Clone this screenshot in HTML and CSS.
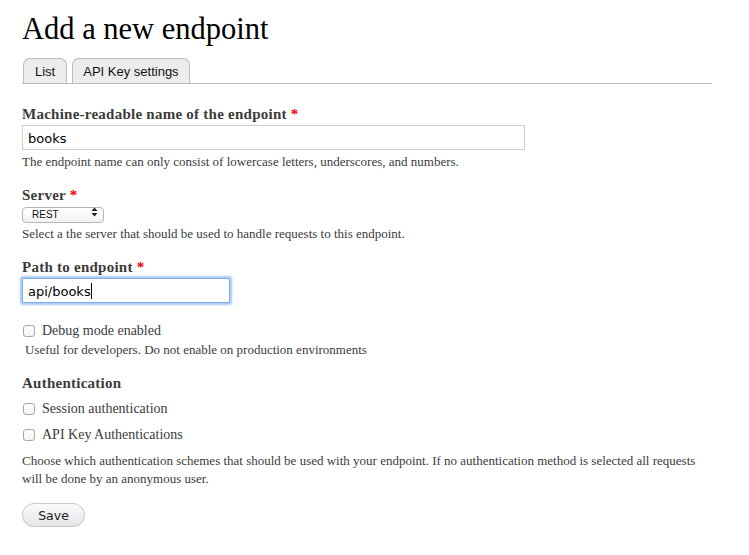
FILE: index.html
```html
<!DOCTYPE html>
<html>
<head>
<meta charset="utf-8">
<link rel="stylesheet" href="styles.css">
</head>
<body>
<div class="page">
  <h1 class="title">Add a new endpoint</h1>
  <ul class="tabs">
    <li class="tab">List</li>
    <li class="tab">API Key settings</li>
  </ul>
  <form class="form">
    <div class="item">
      <label class="label">Machine-readable name of the endpoint <span class="req">*</span></label>
      <input class="text wide" type="text" value="books">
      <div class="desc">The endpoint name can only consist of lowercase letters, underscores, and numbers.</div>
    </div>
    <div class="item">
      <label class="label">Server <span class="req">*</span></label>
      <div class="select-wrap">
        <select class="select"><option>REST</option></select>
        <svg class="arrows" width="7" height="10" viewBox="0 0 7 10"><path d="M3.5 0.5 L6.5 4 L0.5 4 Z M0.5 6 L6.5 6 L3.5 9.5 Z" fill="#222"/></svg>
      </div>
      <div class="desc after-select">Select a the server that should be used to handle requests to this endpoint.</div>
    </div>
    <div class="item">
      <label class="label">Path to endpoint <span class="req">*</span></label>
      <div class="focus-wrap">
        <input class="text path focused" type="text" value="api/books"><span class="caret"></span>
      </div>
    </div>
    <div class="item check-item">
      <label class="check"><input type="checkbox" class="cb"><span>Debug mode enabled</span></label>
      <div class="desc indent">Useful for developers. Do not enable on production environments</div>
    </div>
    <div class="item">
      <div class="label">Authentication</div>
      <div class="checks">
        <label class="check"><input type="checkbox" class="cb"><span>Session authentication</span></label>
        <label class="check"><input type="checkbox" class="cb"><span>API Key Authentications</span></label>
      </div>
      <div class="desc multi">Choose which authentication schemes that should be used with your endpoint. If no authentication method is selected all requests will be done by an anonymous user.</div>
    </div>
    <div class="actions">
      <button type="button" class="btn">Save</button>
    </div>
  </form>
</div>
</body>
</html>
```
FILE: styles.css
```css
html, body {
  margin: 0;
  padding: 0;
  background: #fff;
}
.page {
  padding: 0 37px 0 22px;
  font-family: "Liberation Serif", "DejaVu Serif", serif;
  color: #3b3b3b;
}
.title {
  margin: 0;
  padding-top: 10px;
  font-family: "Liberation Serif", serif;
  font-weight: normal;
  font-size: 30.5px;
  line-height: 38px;
  color: #000;
}
.tabs {
  list-style: none;
  margin: 10px 0 0;
  padding: 0 0 0 1px;
  display: flex;
  gap: 5px;
  border-bottom: 1px solid #bbb;
  height: 25px;
}
.tab {
  font-family: "Liberation Sans", Arial, sans-serif;
  font-size: 13px;
  color: #111;
  background: #ededed;
  border: 1px solid #bbb;
  border-bottom: none;
  border-radius: 7px 7px 0 0;
  padding: 0 10px;
  line-height: 25px;
  height: 25px;
  box-sizing: border-box;
}
.tab:first-child { padding: 0 11px; }
.form {
  margin-top: 21px;
}
.item {
  margin-bottom: 15px;
}
.label {
  display: block;
  font-weight: bold;
  font-size: 15px;
  letter-spacing: 0.25px;
  line-height: 18px;
  color: #3b3b3b;
  margin-bottom: 2px;
}
.req {
  color: #e00;
  font-weight: bold;
}
.text {
  display: block;
  box-sizing: border-box;
  height: 25px;
  border: 1px solid #ccc;
  padding: 1px 5px 0;
  font-family: "DejaVu Sans", sans-serif;
  font-size: 13px;
  color: #000;
  outline: none;
  margin: 0;
}
.wide { width: 503px; }
.path { width: 208px; }
.focus-wrap {
  position: relative;
  width: 208px;
}
.focused {
  border: 1px solid #7eaeea;
  box-shadow: 0 0 2px 2px #a9cbf5;
  border-radius: 1px;
}
.caret {
  position: absolute;
  left: 69px;
  top: 5px;
  width: 1px;
  height: 16px;
  background: #000;
}
.desc {
  font-size: 13px;
  line-height: 18px;
  margin-top: 3px;
  color: #3b3b3b;
}
.desc.after-select { margin-top: 5px; }
.desc.indent { padding-left: 3px; margin-top: 1px; }
.desc.multi { margin-top: 8px; }
.select-wrap {
  position: relative;
  width: 82px;
  height: 16px;
  margin-top: -2px;
}
.select {
  appearance: none;
  -webkit-appearance: none;
  width: 82px;
  height: 16px;
  box-sizing: border-box;
  border: 1px solid #b5b5b5;
  border-radius: 4px;
  background: linear-gradient(#fff, #f1f1f1);
  font-family: "Liberation Sans", Arial, sans-serif;
  font-size: 10px;
  color: #111;
  padding: 0 0 0 9px;
  margin: 0;
  line-height: 14px;
}
.arrows {
  position: absolute;
  right: 6px;
  top: 3px;
  pointer-events: none;
}
.check-item { margin-top: 19px; }
.check {
  display: flex;
  align-items: center;
  gap: 7px;
  font-size: 14px;
  line-height: 18px;
  color: #3b3b3b;
  padding-left: 1px;
}
.checks {
  display: flex;
  flex-direction: column;
  gap: 8px;
  margin-top: 8px;
}
.cb {
  appearance: none;
  -webkit-appearance: none;
  margin: 0;
  width: 12px;
  height: 12px;
  border: 1px solid #a8a8a8;
  border-radius: 3px;
  background: linear-gradient(#fff, #f3f3f3);
  box-sizing: border-box;
  flex: none;
}
.actions {
  margin-top: 15px;
}
.btn {
  font-family: "DejaVu Sans", sans-serif;
  font-size: 12.5px;
  color: #222;
  width: 63px;
  height: 24px;
  border: 1px solid #c8c8c8;
  border-radius: 12px;
  background: linear-gradient(#fafafa, #e6e6e6);
  padding: 0;
  box-shadow: 0 1px 1px rgba(0,0,0,0.08);
}
```
